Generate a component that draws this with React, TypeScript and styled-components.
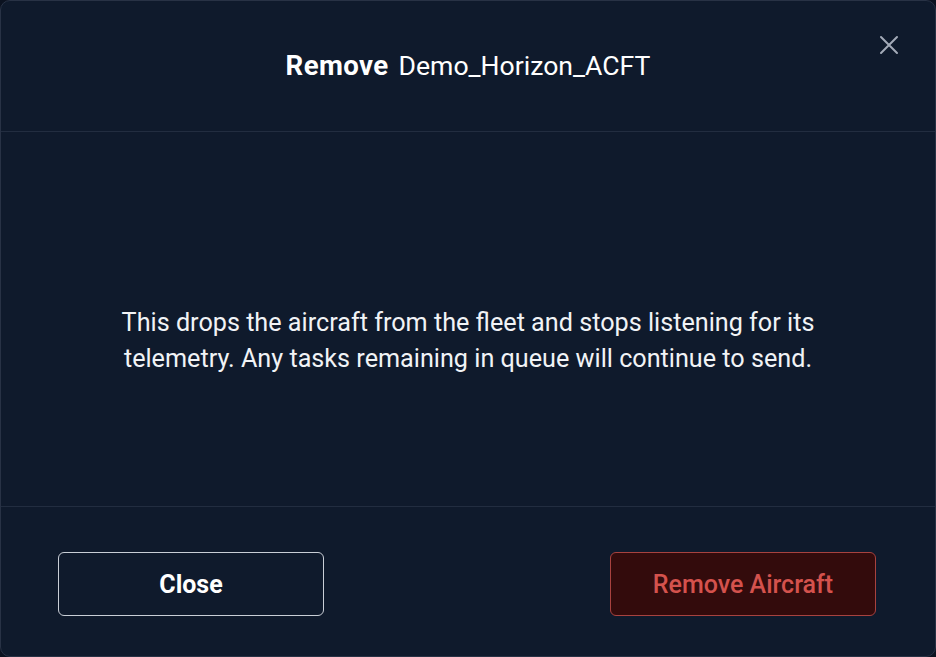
import styled, { createGlobalStyle } from "styled-components";

const GlobalStyle = createGlobalStyle`
  html, body {
    margin: 0;
    padding: 0;
    background: #0b1220;
    font-family: Roboto, "Liberation Sans", sans-serif;
  }
`;

const Modal = styled.div`
  box-sizing: border-box;
  width: 936px;
  height: 657px;
  background: #0f1a2c;
  border: 1px solid #283245;
  border-radius: 10px;
  display: flex;
  flex-direction: column;
  overflow: hidden;
`;

const Header = styled.header`
  position: relative;
  height: 130px;
  border-bottom: 1px solid #222d40;
  display: flex;
  align-items: center;
  justify-content: center;
  flex-shrink: 0;
`;

const Title = styled.h2`
  margin: 0 0 2px;
  color: #ffffff;
  font-size: 26.6px;
  font-weight: 400;
  b {
    font-weight: 700;
    font-size: 27.6px;
    letter-spacing: 0.4px;
    margin-right: 10px;
  }
`;

const CloseIcon = styled.button`
  position: absolute;
  top: 31px;
  right: 33px;
  width: 26px;
  height: 26px;
  padding: 0;
  border: none;
  background: transparent;
  color: #a3abb8;
  display: flex;
  align-items: center;
  justify-content: center;
  cursor: pointer;
`;

const Body = styled.section`
  flex: 1;
  display: flex;
  align-items: center;
  justify-content: center;
  border-bottom: 1px solid #222d40;
  padding-top: 44px;
`;

const Message = styled.p`
  margin: 0;
  max-width: 760px;
  text-align: center;
  color: #f1f3f6;
  font-size: 25.2px;
  line-height: 36px;
`;

const Footer = styled.footer`
  height: 149px;
  flex-shrink: 0;
  box-sizing: border-box;
  padding: 45px 59px 0 57px;
  display: flex;
  justify-content: space-between;
  align-items: flex-start;
`;

const Button = styled.button<{ $danger?: boolean }>`
  width: 266px;
  height: 64px;
  border-radius: 6px;
  font-family: Roboto, "Liberation Sans", sans-serif;
  font-size: 25px;
  cursor: pointer;
  border: 1px solid ${(p) => (p.$danger ? "#a8423f" : "#c9ced6")};
  background: ${(p) => (p.$danger ? "#330b0c" : "transparent")};
  color: ${(p) => (p.$danger ? "#d4524d" : "#ffffff")};
  font-weight: ${(p) => (p.$danger ? 500 : 700)};
`;

export default function App() {
  return (
    <>
      <GlobalStyle />
      <Modal>
        <Header>
          <Title>
            <b>Remove</b>Demo_Horizon_ACFT
          </Title>
          <CloseIcon aria-label="Close">
            <svg width="20" height="20" viewBox="0 0 20 20" fill="none">
              <path
                d="M2 2L18 18M18 2L2 18"
                stroke="currentColor"
                strokeWidth="2"
                strokeLinecap="round"
              />
            </svg>
          </CloseIcon>
        </Header>
        <Body>
          <Message>
            This drops the aircraft from the fleet and stops listening for its
            telemetry. Any tasks remaining in queue will continue to send.
          </Message>
        </Body>
        <Footer>
          <Button>Close</Button>
          <Button $danger>Remove Aircraft</Button>
        </Footer>
      </Modal>
    </>
  );
}
